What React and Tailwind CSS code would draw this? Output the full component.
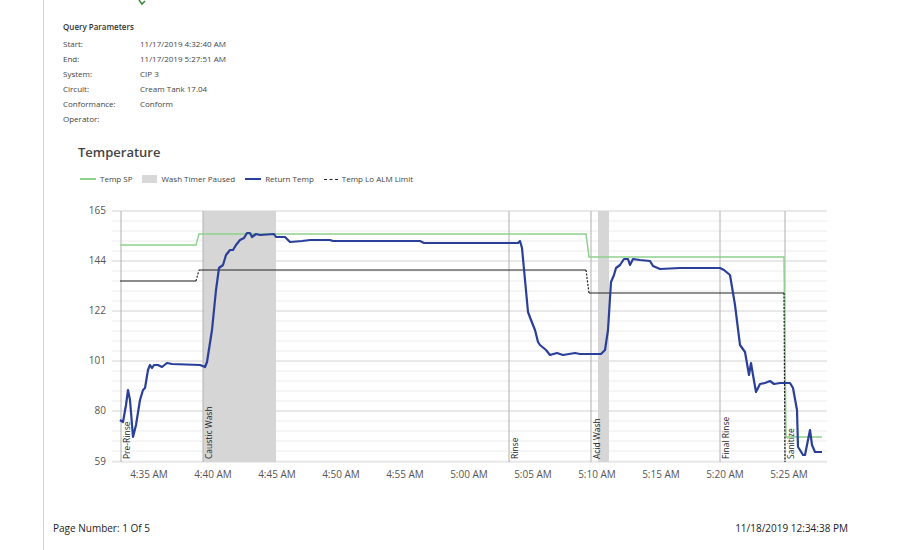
const F = { fontFamily: '"Open Sans", "Noto Sans", sans-serif' };
const blue = [[120,420],[123,422],[126,405],[128,390],[130,400],[133,437],[136,425],[140,400],[143,390],[145,388],[148,370],[150,365],[152,368],[154,365],[158,365],[162,367],[167,363],[172,364],[200,365],[205,367],[207,362],[212,330],[216,290],[219,268],[223,265],[226,255],[230,250],[233,250],[236,245],[240,240],[244,238],[247,233],[250,233],[252,237],[256,234],[260,235],[274,234],[276,237],[285,237],[290,242],[302,241],[310,240],[330,240],[333,241],[420,241],[424,243],[470,243],[518,243],[520,241],[522,248],[525,280],[528,312],[531,320],[535,330],[538,342],[540,345],[546,350],[550,355],[557,353],[563,355],[575,353],[580,354],[601,354],[605,350],[608,330],[611,282],[614,275],[616,268],[620,265],[624,259],[628,259],[630,265],[633,259],[640,260],[650,261],[653,266],[660,269],[680,268],[720,268],[724,270],[730,275],[735,305],[740,345],[745,352],[749,375],[751,363],[753,375],[756,392],[760,384],[765,383],[770,381],[774,384],[780,383],[790,383],[793,388],[797,410],[798,447],[800,450],[803,455],[805,455],[807,445],[810,430],[812,445],[815,452],[822,452]];
const rows = [["Start:","11/17/2019 4:32:40 AM"],["End:","11/17/2019 5:27:51 AM"],["System:","CIP 3"],["Circuit:","Cream Tank 17.04"],["Conformance:","Conform"],["Operator:",""]];
const yl = [[165,211],[144,261],[122,311],[101,361],[80,411],[59,462]];
const xl = ["4:35 AM","4:40 AM","4:45 AM","4:50 AM","4:55 AM","5:00 AM","5:05 AM","5:10 AM","5:15 AM","5:20 AM","5:25 AM"];
const phases = [[121,"Pre-Rinse"],[203,"Caustic Wash"],[509,"Rinse"],[591,"Acid Wash"],[720,"Final Rinse"],[785,"Sanitize"]];
const minors = [];
for (let y = 211; y < 462; y += 10) minors.push(y);
export default function App() {
  return (
    <div className="w-[900px] h-[550px] bg-white relative overflow-hidden text-[#333]" style={F}>
      <div className="absolute left-[43px] top-0 w-px h-[550px] bg-[#d0d0d0]" />
      <svg className="absolute left-[138px] top-0" width="8" height="6"><path d="M1 0 L4 4 L7 1" stroke="#3a8a3a" strokeWidth="1.5" fill="none" /></svg>
      <div className="pl-[63px] pt-[21px]">
        <div className="text-[8px] font-semibold leading-[12px]">Query Parameters</div>
        <div className="mt-[3px]">
          {rows.map(([k, v]) => (
            <div key={k} className="flex text-[8px] leading-[15px] text-[#444]">
              <div className="w-[77px]">{k}</div><div>{v}</div>
            </div>
          ))}
        </div>
        <div className="ml-[15px] mt-[17px] text-[13px] font-semibold text-[#444] leading-[18px]">Temperature</div>
        <div className="ml-[17px] mt-[12px] flex items-center gap-[10px] text-[8px] text-[#444] leading-[12px]">
          <span className="flex items-center gap-[4px]"><span className="w-[16px] h-[2px] bg-[#8fd18f]" />Temp SP</span>
          <span className="flex items-center gap-[4px]"><span className="w-[15px] h-[8px] bg-[#d8d8d8]" />Wash Timer Paused</span>
          <span className="flex items-center gap-[4px]"><span className="w-[16px] h-[2px] bg-[#2a3f9a]" />Return Temp</span>
          <span className="flex items-center gap-[4px]"><span className="w-[14px] border-t-[1.5px] border-dashed border-[#222]" />Temp Lo ALM Limit</span>
        </div>
      </div>
      <svg className="absolute left-[60px] top-[195px]" width="790" height="295" viewBox="60 195 790 295" style={F}>
        {minors.map(y => <line key={y} x1="112" x2="827" y1={y} y2={y} stroke="#ececec" strokeWidth="1" />)}
        {yl.map(([v, y]) => <line key={v} x1="112" x2="827" y1={y} y2={y} stroke="#dcdcdc" strokeWidth="1.2" />)}
        <rect x="203" y="211" width="73" height="251" fill="#d6d6d6" />
        <rect x="598" y="211" width="11" height="251" fill="#d6d6d6" />
        {phases.map(([x, t]) => (
          <g key={t}>
            <line x1={x} x2={x} y1="211" y2="462" stroke="#b0b0b0" />
            <text x="0" y="0" fontSize="8.5" fill="#222" transform={`translate(${x + 9},459) rotate(-90)`}>{t}</text>
          </g>
        ))}
        {yl.map(([v, y]) => <text key={v} x="106" y={y + 3} fontSize="10" fill="#555" textAnchor="end">{v}</text>)}
        {xl.map((t, i) => <text key={t} x={149 + i * 64} y="478" fontSize="10" fill="#555" textAnchor="middle">{t}</text>)}
        <path d="M120 245 H196 L199 234 H586 L589 257 H784 L786 437 H822" stroke="#8fd18f" strokeWidth="1.5" fill="none" />
        <path d="M120 281 H196 M199 270 H586 M589 293 H784" stroke="#222" strokeWidth="1.2" fill="none" />
        <path d="M196 281 L199 270 M586 270 L589 293 M784 293 L785 462" stroke="#222" strokeWidth="1.2" strokeDasharray="2 1.5" fill="none" />
        <polyline points={blue.map(p => p.join(",")).join(" ")} stroke="#2a3f9a" strokeWidth="2.2" fill="none" strokeLinejoin="round" />
      </svg>
      <div className="absolute left-[53px] right-[52px] top-[521px] flex justify-between text-[10px] text-[#222]">
        <span>Page Number: 1 Of 5</span><span>11/18/2019 12:34:38 PM</span>
      </div>
    </div>
  );
}
